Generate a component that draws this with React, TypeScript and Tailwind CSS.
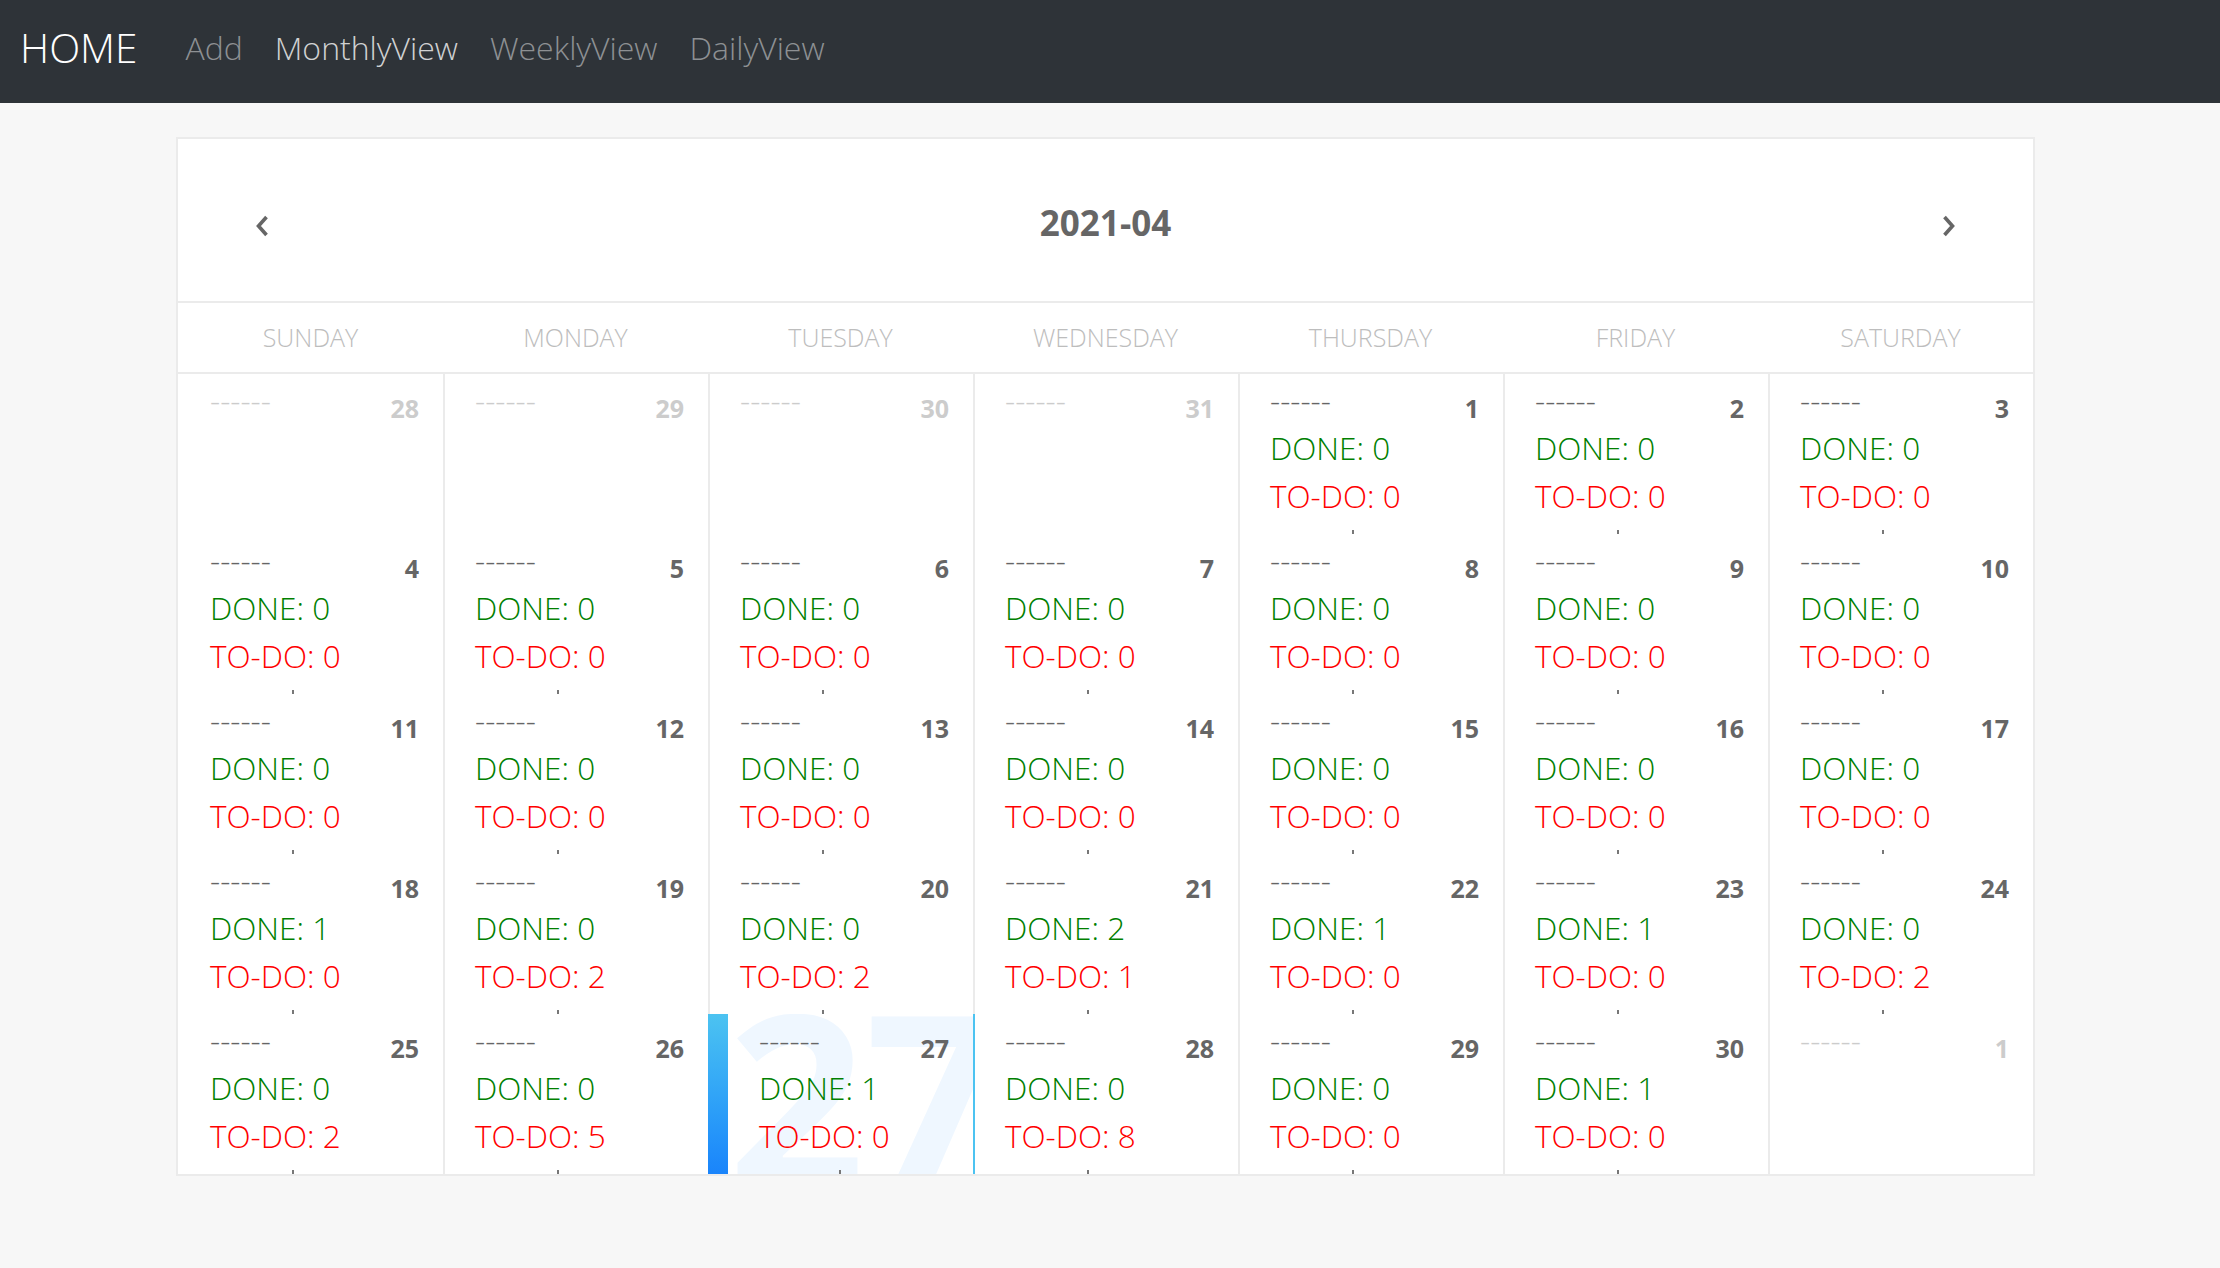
type Day = {
  n: number;
  done?: number;
  todo?: number;
  other?: boolean;
  today?: boolean;
};

const weekdays = ['SUNDAY', 'MONDAY', 'TUESDAY', 'WEDNESDAY', 'THURSDAY', 'FRIDAY', 'SATURDAY'];

const weeks: Day[][] = [
  [
    { n: 28, other: true },
    { n: 29, other: true },
    { n: 30, other: true },
    { n: 31, other: true },
    { n: 1, done: 0, todo: 0 },
    { n: 2, done: 0, todo: 0 },
    { n: 3, done: 0, todo: 0 },
  ],
  [4, 5, 6, 7, 8, 9, 10].map((n) => ({ n, done: 0, todo: 0 })),
  [11, 12, 13, 14, 15, 16, 17].map((n) => ({ n, done: 0, todo: 0 })),
  [
    { n: 18, done: 1, todo: 0 },
    { n: 19, done: 0, todo: 2 },
    { n: 20, done: 0, todo: 2 },
    { n: 21, done: 2, todo: 1 },
    { n: 22, done: 1, todo: 0 },
    { n: 23, done: 1, todo: 0 },
    { n: 24, done: 0, todo: 2 },
  ],
  [
    { n: 25, done: 0, todo: 2 },
    { n: 26, done: 0, todo: 5 },
    { n: 27, done: 1, todo: 0, today: true },
    { n: 28, done: 0, todo: 8 },
    { n: 29, done: 0, todo: 0 },
    { n: 30, done: 1, todo: 0 },
    { n: 1, other: true },
  ],
];

function Chevron({ dir }: { dir: 'left' | 'right' }) {
  return (
    <svg width="16" height="24" viewBox="0 0 16 24" fill="none" className="mt-[6px]">
      <polyline
        points={dir === 'left' ? '12.5,3 4.5,12 12.5,21' : '3.5,3 11.5,12 3.5,21'}
        stroke="#666"
        strokeWidth="3.6"
        strokeLinejoin="miter"
      />
    </svg>
  );
}

function Cell({ day, first }: { day: Day; first: boolean }) {
  const muted = day.other;
  let border = 'border-l-2 border-[#ebebeb]';
  if (first) border = 'border-l-2 border-white';
  if (day.today) border = 'border-l-0';

  return (
    <div className={`relative h-[160px] ${border}`}>
      {day.today && (
        <>
          <div className="absolute inset-0 overflow-hidden">
            <div className="absolute left-0 top-0 bottom-0 w-[20px] bg-gradient-to-b from-[#4cc3f1] to-[#1a84fb]" />
            <div
              aria-hidden="true"
              className="absolute left-[20px] top-[-39px] text-[240px] leading-none font-bold text-[#eff7ff] select-none"
            >
              {day.n}
            </div>
          </div>
          <div className="absolute right-[-2px] top-0 bottom-0 w-[2px] bg-[#4cc3f1] z-10" />
        </>
      )}
      <div className={`relative pt-[2px] pr-[24px] ${day.today ? 'pl-[51px]' : 'pl-[30px]'}`}>
        <div className="flex justify-between items-start">
          <span className={`text-[31.5px] leading-[48px] font-light ${muted ? 'text-[#cccccc]' : 'text-[#666666]'}`}>
            ------
          </span>
          <span className={`mt-[20px] text-[25px] leading-none font-bold ${muted ? 'text-[#cccccc]' : 'text-[#666666]'}`}>
            {day.n}
          </span>
        </div>
        {!muted && (
          <>
            <div className="text-[31.5px] leading-[48px] font-light text-[#008000]">DONE: {day.done}</div>
            <div className="text-[31.5px] leading-[48px] font-light text-[#ff0000]">TO-DO: {day.todo}</div>
          </>
        )}
      </div>
      {!muted && (
        <div className={`absolute bottom-0 w-[2px] h-[4px] bg-[#777777] ${day.today ? 'left-[131px]' : 'left-[112px]'}`} />
      )}
    </div>
  );
}

export default function App() {
  return (
    <div className="min-h-screen bg-[#f7f7f7]" style={{ fontFamily: '"Open Sans", "Noto Sans", sans-serif' }}>
      <nav className="h-[103px] bg-[#2e3338] flex items-center pl-[20px] pb-[7px]">
        <span className="text-[40.5px] font-light text-white mr-[32px]">HOME</span>
        <span className="px-[16px] text-[32px] font-light text-[#8d9093]">Add</span>
        <span className="px-[16px] text-[32px] font-light text-[#d0d1d2]">MonthlyView</span>
        <span className="px-[16px] text-[32px] font-light text-[#8d9093]">WeeklyView</span>
        <span className="px-[16px] text-[32px] font-light text-[#8d9093]">DailyView</span>
      </nav>

      <div className="w-[1859px] ml-[176px] mt-[34px] bg-white border-2 border-[#ebebeb]">
        <div className="h-[164px] border-b-2 border-[#ebebeb] flex items-center justify-between px-[76px] pt-[6px]">
          <Chevron dir="left" />
          <h1 className="text-[35px] font-bold text-[#666666]">2021-04</h1>
          <Chevron dir="right" />
        </div>

        <div className="grid grid-cols-7 h-[71px] border-b-2 border-[#ebebeb]">
          {weekdays.map((w) => (
            <div key={w} className="flex items-center justify-center text-[25px] font-light text-[#bdbdbd]">
              {w}
            </div>
          ))}
        </div>

        <div className="grid grid-cols-7">
          {weeks.map((week, wi) =>
            week.map((day, di) => <Cell key={`${wi}-${di}`} day={day} first={di === 0} />)
          )}
        </div>
      </div>
    </div>
  );
}
